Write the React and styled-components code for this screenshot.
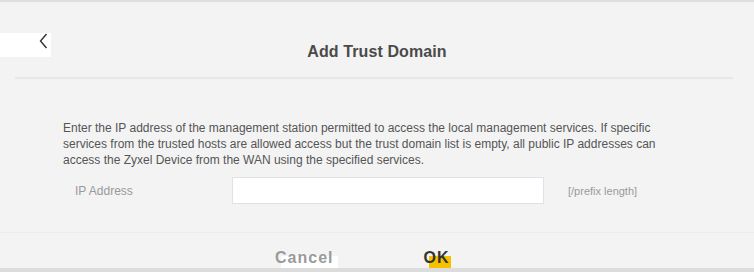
import React from "react";
import styled, { createGlobalStyle } from "styled-components";

const Global = createGlobalStyle`
  html, body { margin: 0; padding: 0; background: #f3f3f3; }
  body { font-family: "Liberation Sans", Arial, sans-serif; }
`;

const Page = styled.div`
  width: 754px;
  height: 272px;
  display: flex;
  flex-direction: column;
  background: #f3f3f3;
  overflow: hidden;
`;

const TopBar = styled.div`
  height: 2px;
  background: #dedede;
  flex: none;
`;

const Header = styled.div`
  height: 75px;
  display: grid;
  grid-template-columns: 1fr auto 1fr;
  align-items: start;
  flex: none;
`;

const BackButton = styled.button`
  margin-top: 31px;
  width: 51px;
  height: 24px;
  border: 0;
  padding: 0 0 0 39px;
  background: #ffffff;
  display: flex;
  align-items: flex-start;
  justify-self: start;
  cursor: pointer;
`;

const Title = styled.h1`
  margin: 40px 0 0;
  font-size: 16px;
  line-height: 20px;
  font-weight: 700;
  color: #4a4a4a;
  letter-spacing: 0.1px;
`;

const Divider = styled.hr`
  margin: 0 21px 0 15px;
  border: 0;
  height: 2px;
  background: #e7e7e7;
  flex: none;
`;

const Content = styled.div`
  padding: 41px 0 0 63px;
  flex: none;
  height: 154px;
  box-sizing: border-box;
  border-bottom: 1px solid #ececec;
`;

const Description = styled.p`
  margin: 0;
  width: 610px;
  font-size: 12px;
  line-height: 16px;
  color: #555555;
`;

const FieldRow = styled.div`
  margin-top: 9px;
  display: flex;
  align-items: center;
`;

const Label = styled.label`
  width: 169px;
  padding-left: 12px;
  box-sizing: border-box;
  font-size: 12px;
  color: #999999;
`;

const Input = styled.input`
  width: 312px;
  height: 27px;
  box-sizing: border-box;
  border: 1px solid #dde2e8;
  background: #ffffff;
  outline: none;
`;

const Hint = styled.span`
  margin-left: 24px;
  font-size: 11px;
  color: #9a9a9a;
`;

const Footer = styled.div`
  flex: 1;
  display: flex;
  align-items: flex-start;
  padding-left: 275px;
  gap: 85px;
`;

const ActionButton = styled.button`
  margin-top: 15px;
  border: 0;
  padding: 0 ${(p) => p.$padRight}px 0 0;
  font-family: inherit;
  font-size: 16px;
  line-height: 20px;
  font-weight: 700;
  letter-spacing: 1px;
  color: ${(p) => p.$color};
  background-color: transparent;
  background-image: linear-gradient(${(p) => p.$bg}, ${(p) => p.$bg});
  background-repeat: no-repeat;
  background-position: ${(p) => p.$bgX}px 8px;
  background-size: ${(p) => p.$bgW}px 20px;
  cursor: pointer;
`;

const BottomBar = styled.div`
  height: 4px;
  background: #dcdcdc;
  flex: none;
`;

export default function App() {
  return (
    <>
      <Global />
      <Page>
        <TopBar />
        <Header>
          <BackButton aria-label="Back">
            <svg width="9" height="16" viewBox="0 0 9 16">
              <path d="M7.5 1 L1.5 8 L7.5 15" fill="none" stroke="#333" strokeWidth="1.4" />
            </svg>
          </BackButton>
          <Title>Add Trust Domain</Title>
          <div />
        </Header>
        <Divider />
        <Content>
          <Description>
            Enter the IP address of the management station permitted to access the local management services. If specific services from the trusted hosts are allowed access but the trust domain list is empty, all public IP addresses can access the Zyxel Device from the WAN using the specified services.
          </Description>
          <FieldRow>
            <Label>IP Address</Label>
            <Input type="text" />
            <Hint>[/prefix length]</Hint>
          </FieldRow>
        </Content>
        <Footer>
          <ActionButton $color="#9a9a9a" $bg="#ffffff" $bgX={6} $bgW={57} $padRight={5}>
            Cancel
          </ActionButton>
          <ActionButton $color="#333333" $bg="#f7c100" $bgX={6} $bgW={22} $padRight={4}>
            OK
          </ActionButton>
        </Footer>
        <BottomBar />
      </Page>
    </>
  );
}
